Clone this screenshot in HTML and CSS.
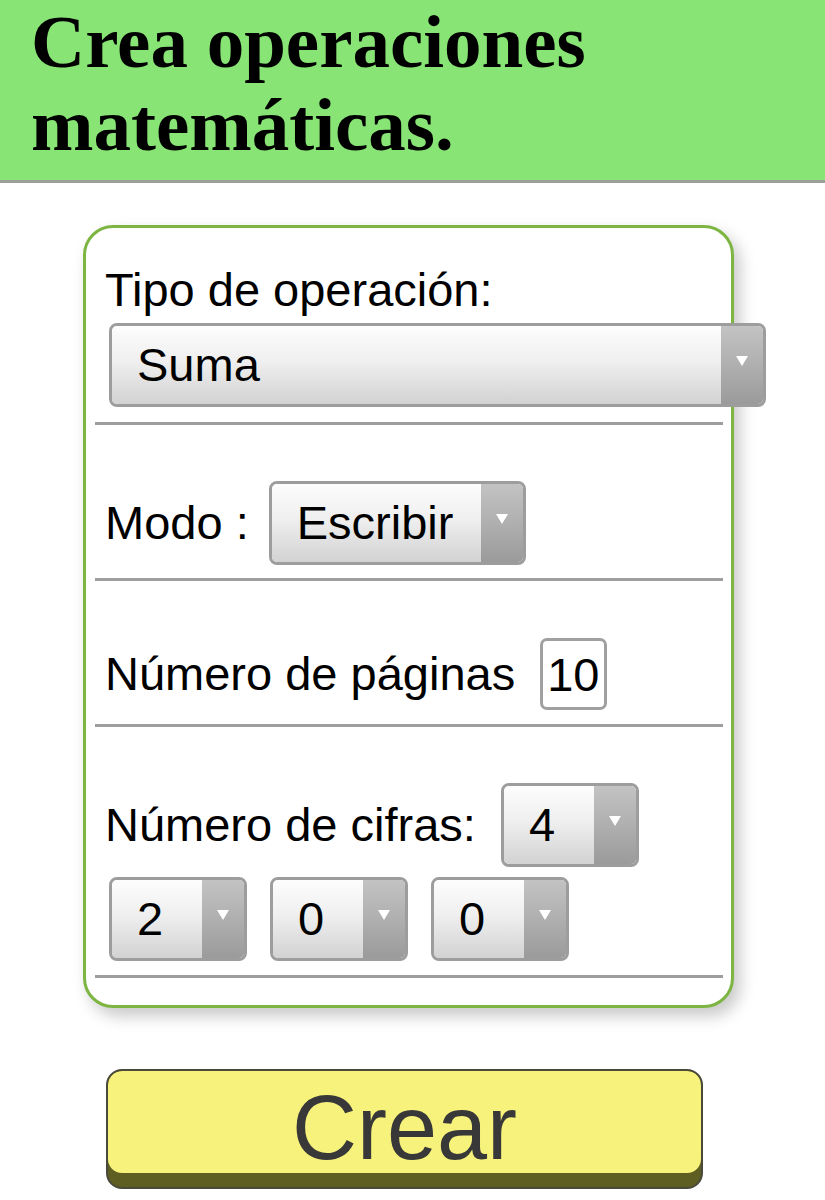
FILE: index.html
```html
<html>
    <head>
        <meta charset="utf-8">
        <title>Crea operaciones matemáticas</title>
        <link rel="stylesheet" href="styles.css">
    </head>
    <body class="body">
        <div class="top">
            <h1 class="title">Crea operaciones matemáticas.</h1>
        </div>
        <form class="card">
            <div class="field field-first">
                <div class="label">Tipo de operación:</div>
                <div class="pick pick-wide">
                    <span class="pick-val">Suma</span>
                    <span class="pick-btn"><svg width="12" height="10" viewBox="0 0 12 10"><path d="M0 0H12L6 10Z" fill="#fff"/></svg></span>
                </div>
            </div>
            <div class="sep"></div>
            <div class="field field-mode">
                <div class="row">
                    <span class="label">Modo :</span>
                    <div class="pick pick-mode">
                        <span class="pick-val">Escribir</span>
                        <span class="pick-btn"><svg width="12" height="10" viewBox="0 0 12 10"><path d="M0 0H12L6 10Z" fill="#fff"/></svg></span>
                    </div>
                </div>
            </div>
            <div class="sep"></div>
            <div class="field field-pages">
                <div class="row">
                    <span class="label">Número de páginas</span>
                    <input class="num" type="text" value="10">
                </div>
            </div>
            <div class="sep"></div>
            <div class="field field-digits">
                <div class="row">
                    <span class="label">Número de cifras:</span>
                    <div class="pick pick-small pick-count">
                        <span class="pick-val">4</span>
                        <span class="pick-btn"><svg width="12" height="10" viewBox="0 0 12 10"><path d="M0 0H12L6 10Z" fill="#fff"/></svg></span>
                    </div>
                </div>
                <div class="row digits">
                    <div class="pick pick-small">
                        <span class="pick-val">2</span>
                        <span class="pick-btn"><svg width="12" height="10" viewBox="0 0 12 10"><path d="M0 0H12L6 10Z" fill="#fff"/></svg></span>
                    </div>
                    <div class="pick pick-small">
                        <span class="pick-val">0</span>
                        <span class="pick-btn"><svg width="12" height="10" viewBox="0 0 12 10"><path d="M0 0H12L6 10Z" fill="#fff"/></svg></span>
                    </div>
                    <div class="pick pick-small">
                        <span class="pick-val">0</span>
                        <span class="pick-btn"><svg width="12" height="10" viewBox="0 0 12 10"><path d="M0 0H12L6 10Z" fill="#fff"/></svg></span>
                    </div>
                </div>
            </div>
            <div class="sep"></div>
        </form>
        <button class="crear" type="button"><span class="crear-face">Crear</span></button>
    </body>
</html>
```

FILE: styles.css
```css
.body{
    margin:0;
    background:#fff;
    font-family:"Liberation Sans", Arial, sans-serif;
    color:#000;
}

.top{
    height:180px;
    background:#88e474;
    border-bottom:3px solid #9c9e9a;
}
.title{
    margin:0;
    padding-left:31px;
    font-family:"Liberation Serif", "Times New Roman", serif;
    font-weight:bold;
    font-size:75px;
    line-height:83px;
}

.card{
    box-sizing:border-box;
    width:651px;
    margin:42px 0 0 83px;
    padding:0 8px 27px 9px;
    border:3px solid #7db543;
    border-radius:30px;
    background:#fff;
    box-shadow:6px 8px 16px rgba(0,0,0,0.22);
}

.field{
    padding:0 0 14px 10px;
}
.field-first{
    padding-top:35px;
    padding-bottom:15px;
}
.field-mode{
    padding-top:56px;
    padding-bottom:13px;
}
.field-pages{
    padding-top:57px;
}
.field-digits{
    padding-top:56px;
}

.label{
    font-size:47px;
    line-height:54px;
    white-space:nowrap;
}

.row{
    display:flex;
    align-items:center;
}
.digits{
    margin-top:10px;
    padding-left:4px;
    gap:23px;
}

.sep{
    height:3px;
    background:#9e9e9e;
}

.pick{
    box-sizing:border-box;
    display:flex;
    height:84px;
    border:3px solid #9d9d9d;
    border-radius:8px;
    overflow:hidden;
    flex-shrink:0;
}
.pick-val{
    flex:1;
    padding-left:25px;
    font-size:47px;
    line-height:78px;
    background:linear-gradient(#fdfdfd, #efefef 45%, #d2d2d2);
}
.pick-btn{
    width:42px;
    display:flex;
    justify-content:center;
    padding-top:30px;
    box-sizing:border-box;
    background:linear-gradient(#c3c3c3, #9b9b9b);
}
.pick-wide{
    width:657px;
    margin:6px 0 0 4px;
    position:relative;
}
.pick-mode{
    width:257px;
    margin-left:20px;
}
.pick-small{
    width:138px;
}
.pick-count{
    margin-left:25px;
}

.num{
    box-sizing:border-box;
    width:67px;
    height:72px;
    margin-left:25px;
    padding:0 4px;
    border:3px solid #a0a0a0;
    border-radius:7px;
    font-family:"Liberation Sans", Arial, sans-serif;
    font-size:47px;
    color:#000;
    background:#fff;
}

.crear{
    display:block;
    box-sizing:border-box;
    width:597px;
    margin:61px 0 0 106px;
    padding:0 0 14px;
    border:2px solid #4a4a3c;
    border-radius:16px;
    background:#5e5e22;
    overflow:hidden;
    font-family:"Liberation Sans", Arial, sans-serif;
}
.crear-face{
    display:block;
    padding-top:13px;
    height:102px;
    box-sizing:border-box;
    border-radius:14px;
    background:#f6f27b;
    color:#383838;
    font-size:90px;
    line-height:88px;
}
```
